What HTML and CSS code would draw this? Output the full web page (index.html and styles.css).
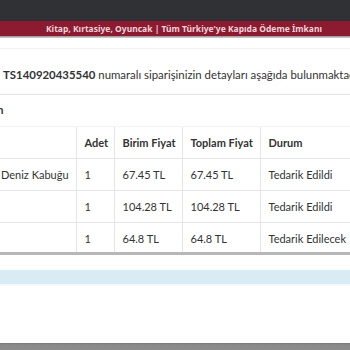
FILE: index.html
```html
<!DOCTYPE html>
<html lang="tr">
<head>
<meta charset="utf-8">
<link rel="stylesheet" href="styles.css">
</head>
<body>
<div class="topbar"></div>
<div class="promo">Kitap, Kırtasiye, Oyuncak | Tüm Türkiye'ye Kapıda Ödeme İmkanı</div>
<div class="promo-shadow"></div>
<div class="page">
  <div class="rule-top"></div>
  <p class="message"><strong>TS140920435540</strong> numaralı siparişinizin detayları aşağıda bulunmaktadır.</p>
  <div class="section-title"><span>Ürün</span></div>
  <table class="orders">
    <colgroup>
      <col class="c-name"><col class="c-qty"><col class="c-unit"><col class="c-total"><col class="c-status">
    </colgroup>
    <thead>
      <tr><th class="name"></th><th>Adet</th><th>Birim Fiyat</th><th>Toplam Fiyat</th><th>Durum</th></tr>
    </thead>
    <tbody>
      <tr><td class="name">Deniz Kabuğu</td><td>1</td><td>67.45 TL</td><td>67.45 TL</td><td>Tedarik Edildi</td></tr>
      <tr><td class="name"></td><td>1</td><td>104.28 TL</td><td>104.28 TL</td><td>Tedarik Edildi</td></tr>
      <tr><td class="name"></td><td>1</td><td>64.8 TL</td><td>64.8 TL</td><td>Tedarik Edilecek</td></tr>
    </tbody>
  </table>
  <div class="table-shadow"></div>
  <div class="info-band"></div>
</div>
<div class="backdrop"></div>
</body>
</html>
```
FILE: styles.css
```css
html, body {
  margin: 0;
  padding: 0;
  width: 350px;
  height: 350px;
  overflow: hidden;
  background: #fff;
  font-family: "Lato", "Noto Sans", sans-serif;
  color: #333;
}
.topbar {
  height: 21px;
  background: #2f3135;
}
.promo {
  height: 15px;
  line-height: 15px;
  background: #8c1a31;
  color: #ecd2d8;
  font-family: "Noto Sans", sans-serif;
  font-weight: 700;
  font-size: 8.5px;
  text-align: center;
  padding-left: 18px;
  white-space: nowrap;
}
.promo-shadow {
  height: 2px;
  background: linear-gradient(#8f8f8f, #d8d8d8);
}
.page {
  height: 295px;
}
.rule-top {
  margin-top: 10px;
  height: 1px;
  background: #f1f1f1;
}
.message {
  margin: 0;
  padding: 18px 0 0 3px;
  font-size: 11.4px;
  line-height: 16px;
  white-space: nowrap;
  height: 27px;
  border-bottom: 1px solid #e2e2e2;
}
.message strong {
  font-weight: 700;
}
.section-title {
  height: 30px;
  line-height: 30px;
  font-size: 11px;
  font-weight: 700;
  white-space: nowrap;
  overflow: hidden;
}
.section-title span {
  display: inline-block;
  margin-left: -21px;
}
.orders {
  border-collapse: collapse;
  table-layout: fixed;
  width: 370px;
  font-size: 11px;
  white-space: nowrap;
  margin-top: 1px;
}
.c-name { width: 76px; }
.c-qty { width: 38px; }
.c-unit { width: 68px; }
.c-total { width: 78px; }
.c-status { width: 110px; }
.orders th, .orders td {
  height: 31px;
  padding: 0 8px;
  text-align: left;
  overflow: hidden;
  border-left: 1px solid #e6e6e6;
  border-top: 1px solid #e6e6e6;
}
.orders th {
  font-weight: 700;
  border-top: 1px solid #f3f3f3;
}
.orders .name {
  padding-left: 1px;
  border-left: none;
}
.table-shadow {
  height: 3px;
  margin-top: -2px;
  background: #b8b8b8;
  position: relative;
}
.info-band {
  margin-top: 15px;
  height: 14px;
  background: #d9ebf3;
  border-bottom: 2px solid #f2f8fb;
}
.backdrop {
  height: 17px;
  background: linear-gradient(#777 0, #8a8a8a 2px, #8f8f8f);
}
```
